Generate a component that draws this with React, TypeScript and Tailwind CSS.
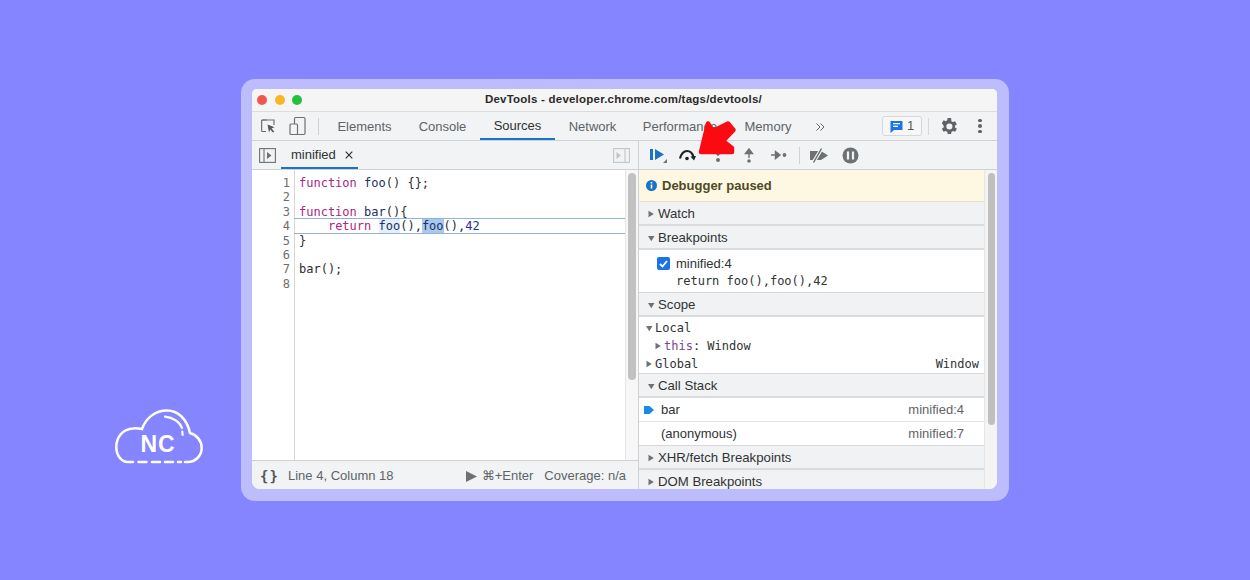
import type { ReactNode } from "react";

const sans = "font-['Liberation_Sans',Arial,sans-serif]";
const mono = "font-['DejaVu_Sans_Mono',monospace]";

function Tri({ open }: { open?: boolean }) {
  return (
    <svg width="8" height="8" viewBox="0 0 8 8" className="shrink-0">
      <path d={open ? "M1 2h6.500L4.250 7.200z" : "M1.500 .800v6.500L6.800 4z"} fill="#6e7174" />
    </svg>
  );
}

function SectionHead({ title, open, h = "h-6" }: { title: string; open?: boolean; h?: string }) {
  return (
    <div className={`${h} flex items-center gap-[3px] pl-[8px] pt-[2px] bg-[#f0f2f3] border-b-2 border-[#d9dbdd] text-[13.2px] text-[#303234] shrink-0`}>
      <Tri open={open} />
      <span>{title}</span>
    </div>
  );
}

function Cloud() {
  return (
    <svg width="88" height="58" viewBox="0 0 88 58" fill="none" stroke="#fff" strokeWidth="2.500" strokeLinecap="round" className="shrink-0">
      <path d="M18 53H13C6 53 1.300 46 1.300 38C1.300 28 8 20 18 19.500C21 19 24 19.500 27 20C31 9 40 1.500 52 1.500C63 1.500 72 10 75 24C82 26 86.700 32 86.700 39C86.700 47 80 53 73 53H70" />
      <path d="M23.500 53h8M37 53h8M50 53h8M63 53h3" />
      <path d="M50 7.700C58 8.500 65 13 67 19" strokeWidth="2.200" />
      <path d="M67.300 22.500l.3 3.500" strokeWidth="2.200" />
      <text x="43" y="42.500" textAnchor="middle" fill="#fff" stroke="none" fontFamily="Liberation Sans, Arial, sans-serif" fontWeight="700" fontSize="23" letterSpacing="1">NC</text>
    </svg>
  );
}

function Tab({ children, active }: { children: ReactNode; active?: boolean }) {
  return (
    <div className={`h-full flex items-center justify-center pt-[2px] text-[13px] ${active ? "text-[#303234] border-b-2 border-[#1a73c8]" : "text-[#5f6368]"}`}>
      {children}
    </div>
  );
}

function CodeLine({ n, children }: { n: number; children?: ReactNode }) {
  return (
    <div className="flex h-[14.4px] leading-[14.4px]">
      <div className="w-[39px] shrink-0 pr-[1px] text-right text-[#6b6e71]">{n}</div>
      <div className="pl-[8px] flex-1 whitespace-pre text-[#2b2d30]">{children}</div>
    </div>
  );
}

const kw = "text-[#a8277f]";
const fn = "text-[#1c2f66]";

export default function App() {
  return (
    <div className={`w-[1250px] h-[580px] bg-[#8585ff] overflow-hidden flex items-start pl-[115px] pt-[79px] ${sans}`}>
      <div className="mt-[330px] mr-[38px]">
        <Cloud />
      </div>

      <div className="relative w-[768px] h-[422px] rounded-[14px] bg-[#bdbdfd] pt-[10px] pl-[11px] pr-[12px] pb-[12px]">
        <div className="w-full h-full flex flex-col bg-white rounded-t-[5px] rounded-b-[8px] overflow-hidden">
          {/* title bar */}
          <div className="h-[23px] shrink-0 relative flex items-center justify-center bg-[#f6f5f5] border-b border-[#dcdcdc]">
            <div className="absolute left-[1px] top-[6px] flex gap-[7.5px] pl-[4px]">
              <span className="w-[10px] h-[10px] rounded-full bg-[#f1574f]" />
              <span className="w-[10px] h-[10px] rounded-full bg-[#fcb527]" />
              <span className="w-[10px] h-[10px] rounded-full bg-[#24c13b]" />
            </div>
            <span className="text-[11.5px] font-bold text-[#2a2a2a] tracking-[0.22px] pr-[2px]">DevTools - developer.chrome.com/tags/devtools/</span>
          </div>

          {/* main tab bar */}
          <div className="h-[29px] shrink-0 flex items-center bg-[#f1f3f4] border-b border-[#cfd2d4]">
            <div className="w-[66px] pl-[8px] flex items-center gap-[12px] h-full shrink-0">
              <svg width="17" height="17" viewBox="0 0 17 17" fill="none" className="shrink-0">
                <path d="M7 2H2.600a1 1 0 0 0-1 1v9.500a1 1 0 0 0 1 1H6" stroke="#6e7174" strokeWidth="1.200" />
                <path d="M2 2h12v5" stroke="#6e7174" strokeWidth="1.200" />
                <path d="M7.500 6.500l7 2.700-3 1.200 2.800 3-1.300 1.200-2.800-3-1.200 3z" fill="#55585b" />
              </svg>
              <svg width="17" height="20" viewBox="0 0 17 20" fill="none" className="shrink-0">
                <rect x="5.500" y="1.500" width="10.500" height="17" rx="1.200" stroke="#6e7174" strokeWidth="1.200" />
                <rect x="1" y="8" width="7.500" height="10.500" rx="1" fill="#f1f3f4" stroke="#6e7174" strokeWidth="1.200" />
              </svg>
            </div>
            <div className="w-px h-[17px] bg-[#cfd2d4] shrink-0" />
            <div className="flex h-full">
              <div className="w-[86px] pl-[5px]"><Tab>Elements</Tab></div>
              <div className="w-[75px]"><Tab>Console</Tab></div>
              <div className="w-[75px]"><Tab active>Sources</Tab></div>
              <div className="w-[75px]"><Tab>Network</Tab></div>
              <div className="w-[100px]"><Tab>Performance</Tab></div>
              <div className="w-[50px] ml-[13px]"><Tab>Memory</Tab></div>
            </div>
            <svg width="9" height="8" viewBox="0 0 9 8" fill="none" className="ml-[23px] mt-[1px] shrink-0">
              <path d="M.500.500L4 4 .500 7.500M4.500.500L8 4 4.500 7.500" stroke="#5f6368" strokeWidth="1" />
            </svg>
            <div className="ml-[57px] w-[40px] h-[20px] flex items-center justify-center gap-[4px] rounded-[3px] border border-[#d5d8da] bg-[#f5f7f8] text-[13px] text-[#55585b]">
              <svg width="13" height="13" viewBox="0 0 13 13">
                <path d="M.500 1h12v9H4l-3.500 3z" fill="#1a73e8" />
                <path d="M3 3.700h7M3 6.300h5" stroke="#fff" strokeWidth="1.200" />
              </svg>
              1
            </div>
            <div className="ml-[6px] w-px h-[17px] bg-[#d5d8da]" />
            <svg width="21" height="21" viewBox="0 0 24 24" className="ml-[9px] shrink-0">
              <path fill="#5f6368" d="M19.400 13a7.500 7.500 0 0 0 0-2l2.100-1.600-2-3.500-2.500 1a7.400 7.400 0 0 0-1.700-1L15 2.300h-4l-.4 2.600a7.400 7.400 0 0 0-1.700 1l-2.500-1-2 3.500L6.500 11a7.500 7.500 0 0 0 0 2l-2.100 1.600 2 3.500 2.500-1a7.400 7.400 0 0 0 1.700 1l.4 2.600h4l.4-2.600a7.400 7.400 0 0 0 1.700-1l2.500 1 2-3.500zM13 15.500a3.500 3.500 0 1 1 0-7 3.500 3.500 0 0 1 0 7z" />
            </svg>
            <div className="ml-[19px] flex flex-col gap-[2px]">
              <span className="w-[3.500px] h-[3.500px] rounded-full bg-[#5f6368]" />
              <span className="w-[3.500px] h-[3.500px] rounded-full bg-[#5f6368]" />
              <span className="w-[3.500px] h-[3.500px] rounded-full bg-[#5f6368]" />
            </div>
          </div>

          <div className="flex-1 flex min-h-0">
            {/* left column */}
            <div className="w-[387px] shrink-0 flex flex-col border-r border-[#cfd2d4]">
              <div className="h-[29px] shrink-0 flex items-center bg-[#f1f3f4] border-b border-[#cfd2d4]">
                <svg width="17" height="15" viewBox="0 0 17 15" fill="none" className="ml-[7px] shrink-0">
                  <rect x="0.600" y="0.600" width="15.800" height="13.800" stroke="#6e7174" strokeWidth="1.100" />
                  <path d="M5 .600v13.800" stroke="#6e7174" strokeWidth="1.100" />
                  <path d="M8 4v7l4.500-3.500z" fill="#6e7174" />
                </svg>
                <div className="ml-[5px] w-[77px] h-full flex items-center pl-[10px] pt-[2px] gap-[9px] border-b-2 border-[#1a73c8] text-[13px] text-[#303234]">
                  minified
                  <svg width="8" height="8" viewBox="0 0 8 8" className="shrink-0">
                    <path d="M.700.700l6.600 6.600M7.300.700L.700 7.300" stroke="#303234" strokeWidth="1.200" />
                  </svg>
                </div>
                <svg width="17" height="15" viewBox="0 0 17 15" fill="none" className="ml-auto mr-[8px] shrink-0">
                  <rect x="0.600" y="0.600" width="15.800" height="13.800" stroke="#c2c5c7" strokeWidth="1.100" />
                  <path d="M12 .600v13.800" stroke="#c2c5c7" strokeWidth="1.100" />
                  <path d="M3.500 4v7L8 7.500z" fill="#c2c5c7" />
                </svg>
              </div>

              <div className="flex-1 flex min-h-0 bg-white">
                <div className="flex-1 relative">
                  <div className="absolute left-[42px] top-0 bottom-0 w-px bg-[#d4d6d8]" />
                  <div className="absolute left-[42px] right-0 top-[48px] h-[16px] border-y border-[#8fb2d6]" />
                  <div className={`relative pt-[6px] text-[12px] ${mono}`}>
                    <CodeLine n={1}><span className={kw}>function</span> <span className={fn}>foo</span>() {"{};"}</CodeLine>
                    <CodeLine n={2} />
                    <CodeLine n={3}><span className={kw}>function</span> <span className={fn}>bar</span>(){"{"}</CodeLine>
                    <CodeLine n={4}>
                      {"    "}<span className={kw}>return</span> <span className={`${fn} bg-[#e5eef9]`}>foo</span>(),<span className={`${fn} bg-[#a9c8ee]`}>foo</span>(),<span className="text-[#2a2aa8]">42</span>
                    </CodeLine>
                    <CodeLine n={5}>{"}"}</CodeLine>
                    <CodeLine n={6} />
                    <CodeLine n={7}>bar();</CodeLine>
                    <CodeLine n={8} />
                  </div>
                </div>
                <div className="w-[13px] shrink-0 bg-[#f7f7f7] border-l border-[#e6e6e6] pt-[3px] pl-[2px]">
                  <div className="w-[8px] h-[207px] rounded-full bg-[#c2c2c2]" />
                </div>
              </div>

              <div className="h-[29px] shrink-0 flex items-center pt-[2px] bg-[#f1f3f4] border-t border-[#cfd2d4] text-[13px] text-[#5f6368]">
                <span className={`ml-[8px] w-[28px] text-[14px] font-bold tracking-[1px] text-[#55585b] ${mono}`}>{"{}"}</span>
                <span>Line 4, Column 18</span>
                <svg width="11" height="11" viewBox="0 0 11 11" className="ml-auto mr-[5px] shrink-0">
                  <path d="M0 0v11l11-5.500z" fill="#6e7174" />
                </svg>
                <span>⌘+Enter</span>
                <span className="ml-[11px] mr-[12px]">Coverage: n/a</span>
              </div>
            </div>

            {/* right column */}
            <div className="flex-1 flex flex-col min-w-0">
              <div className="h-[29px] shrink-0 flex items-center bg-[#f1f3f4] border-b border-[#cfd2d4]">
                <svg width="18" height="16" viewBox="0 0 18 16" className="ml-[10px] shrink-0">
                  <path d="M1 2h3v11H1zM6 2l9 5.500L6 13z" fill="#1a73c8" />
                  <path d="M18 16h-4l4-4z" fill="#6e7174" />
                </svg>
                <svg width="18" height="12" viewBox="0 0 18 12" fill="none" className="ml-[11px] shrink-0">
                  <path d="M2 9.500C3.500 4 6 2 9 2s5.500 2 6.500 6" stroke="#202124" strokeWidth="2.200" />
                  <path d="M12.500 7.500l5.500-.5-2 4.500z" fill="#202124" />
                  <circle cx="9" cy="9.500" r="1.800" fill="#202124" />
                </svg>
                <svg width="10" height="15" viewBox="0 0 10 15" className="ml-[17px] shrink-0">
                  <path d="M5 0v6M2 4l3 3 3-3" stroke="#6e7174" strokeWidth="1.600" fill="none" />
                  <circle cx="5" cy="12" r="2" fill="#6e7174" />
                </svg>
                <svg width="10" height="15" viewBox="0 0 10 15" className="ml-[21px] shrink-0">
                  <path d="M5 2v8M1.500 5.500L5 1l3.500 4.500z" stroke="#6e7174" strokeWidth="1.400" fill="#6e7174" />
                  <circle cx="5" cy="13" r="1.800" fill="#6e7174" />
                </svg>
                <svg width="16" height="10" viewBox="0 0 16 10" className="ml-[17px] shrink-0">
                  <path d="M0 5h7M4.500 1.500L9 5l-4.500 3.500z" stroke="#6e7174" strokeWidth="1.400" fill="#6e7174" />
                  <circle cx="13.500" cy="5" r="1.900" fill="#6e7174" />
                </svg>
                <div className="ml-[12px] w-px h-[17px] bg-[#cfd2d4]" />
                <svg width="20" height="17" viewBox="0 0 20 17" className="ml-[9px] shrink-0">
                  <path d="M1 4h11l7 4.500-7 4.500H1z" fill="#6e7174" />
                  <path d="M4 16L13 1" stroke="#f1f3f4" strokeWidth="3.500" />
                  <path d="M4.500 15.500L12.500 1.500" stroke="#6e7174" strokeWidth="1.500" />
                </svg>
                <svg width="17" height="17" viewBox="0 0 17 17" className="ml-[13px] shrink-0">
                  <circle cx="8.500" cy="8.500" r="8" fill="#6e7174" />
                  <path d="M6 4.500v8M11 4.500v8" stroke="#f1f3f4" strokeWidth="2.200" />
                </svg>
              </div>

              <div className="flex-1 flex min-h-0">
                <div className="flex-1 min-w-0 flex flex-col overflow-hidden bg-white">
                  <div className="h-[32px] shrink-0 flex items-center gap-[5px] pl-[7px] bg-[#fef8e3] border-b border-[#e4e2d6] text-[13px] font-bold text-[#4e4a26]">
                    <svg width="11" height="11" viewBox="0 0 11 11" className="shrink-0">
                      <circle cx="5.500" cy="5.500" r="5.500" fill="#1a73c8" />
                      <path d="M5.500 4.500v4M5.500 2v1.500" stroke="#fff" strokeWidth="1.600" />
                    </svg>
                    Debugger paused
                  </div>
                  <SectionHead title="Watch" />
                  <SectionHead title="Breakpoints" open />
                  <div className="h-[43px] shrink-0 border-b border-[#d6d8da] pl-[18px] pt-[7px]">
                    <div className="flex items-center gap-[6px] h-[13px] text-[13px] text-[#303234]">
                      <span className="w-[13px] h-[13px] rounded-[2px] bg-[#1a73e8] flex items-center justify-center shrink-0">
                        <svg width="9" height="8" viewBox="0 0 9 8" fill="none">
                          <path d="M1 4l2.500 2.500L8 1" stroke="#fff" strokeWidth="1.800" />
                        </svg>
                      </span>
                      minified:4
                    </div>
                    <div className={`mt-[4px] ml-[19px] text-[12px] leading-[15px] text-[#303234] whitespace-pre ${mono}`}>return foo(),foo(),42</div>
                  </div>
                  <SectionHead title="Scope" open />
                  <div className={`h-[57px] shrink-0 border-b border-[#d6d8da] text-[12px] leading-[18px] text-[#303234] pt-[2px] ${mono}`}>
                    <div className="flex items-center gap-[2px] pl-[6px] h-[18px]"><Tri open />Local</div>
                    <div className="flex items-center gap-[2px] pl-[15px] h-[18px]"><Tri /><span><span className="text-[#7a4a8a]">this</span>: Window</span></div>
                    <div className="flex items-center gap-[2px] pl-[6px] pr-[5px] h-[18px]"><Tri />Global<span className="ml-auto">Window</span></div>
                  </div>
                  <SectionHead title="Call Stack" open />
                  <div className="h-[24px] shrink-0 flex items-center border-b border-[#e2e3e5] text-[13px] text-[#303234] pr-[20px]">
                    <svg width="10" height="10" viewBox="0 0 10 10" className="ml-[5px] shrink-0">
                      <path d="M0 1h5.500L10 5 5.500 9H0z" fill="#1a8ae8" />
                    </svg>
                    <span className="ml-[7px]">bar</span>
                    <span className="ml-auto text-[#5f6368]">minified:4</span>
                  </div>
                  <div className="h-[24px] shrink-0 flex items-center border-b border-[#d6d8da] text-[13px] text-[#303234] pl-[22px] pr-[20px]">
                    <span>(anonymous)</span>
                    <span className="ml-auto text-[#5f6368]">minified:7</span>
                  </div>
                  <SectionHead title="XHR/fetch Breakpoints" />
                  <SectionHead title="DOM Breakpoints" />
                </div>
                <div className="w-[13px] shrink-0 bg-[#f4f4f4] border-l border-[#e6e6e6] pt-[3px] pl-[3px]">
                  <div className="w-[7px] h-[252px] rounded-full bg-[#bfbfbf]" />
                </div>
              </div>
            </div>
          </div>
        </div>

        {/* annotation arrow drawn over the toolbar */}
        <svg width="44" height="40" viewBox="0 0 44 40" className="absolute left-[456px] top-[41px]" fill="#fb0a12" stroke="#fb0a12" strokeWidth="4.500" strokeLinejoin="round">
          <path d="M4 32L11 3.500L16 11L31 3.500L36.500 10L26 21L35 28L35 32z" />
        </svg>
      </div>
    </div>
  );
}
